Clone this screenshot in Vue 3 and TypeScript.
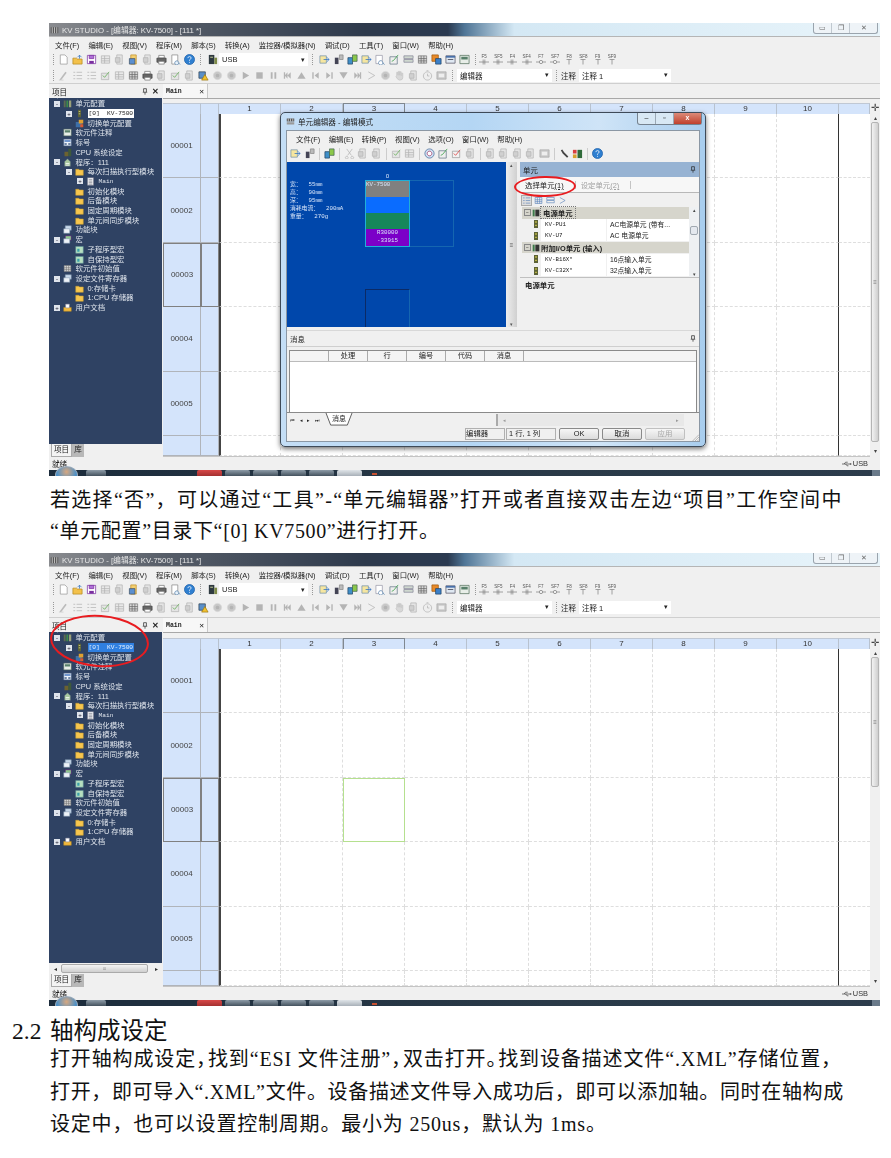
<script setup lang="ts">
type Part = [string, string, string?];

interface TreeRow {
    lv: number;
    exp?: "+" | "-";
    icon: string;
    text: string;
    mono?: boolean;
    picked?: boolean;
}

const gy = "#b4b4b4";
const icons: Record<string, Part[]> = {
    new: [["M2.5 1h5L10 3.5V11H2.5z", "#fff", "#999"]],
    open: [["M1 4.5h4l1 1h5V11H1z", "#f3c14b", "#b88a1e"], ["M6 3.5l2.2-2.2 2.2 2.2M8.2 1.5v3.5", "none", "#2a6fc0"]],
    save: [["M1.5 1.5h9v9h-9z", "#fff", "#7a2fa0"], ["M3.5 1.5h5v3.5h-5z", "#b070d8", "#7a2fa0"], ["M3.5 7.5h5v3h-5z", "#7a2fa0"]],
    sheet: [["M1.5 2h9v8h-9z", "#e8e8e8", gy], ["M1.5 5h9M1.5 7.5h9M5 2v8", "none", gy]],
    docg: [["M3 1h6v10H3z", "#e4e4e4", gy], ["M1.5 4h5v5h-5z", "#d0d0d0", gy]],
    docy: [["M3 1h6v10H3z", "#f4d070", "#c09030"], ["M1.5 5h6v6h-6z", "#5b8fd0", "#456"]],
    print: [["M3 1.5h6v3H3z", "#fff", "#777"], ["M1 4.5h10v4.5H1z", "#666", "#444"], ["M3 8h6v3H3z", "#fff", "#777"]],
    preview: [["M2 1h6.5v10H2z", "#fff", "#888"], ["M9 8.2a2.2 2.2 0 1 1-.1-.1zM9 9.5l2 2", "#e8f2fb", "#5580a8"]],
    help: [["M6 .5a5.5 5.5 0 1 0 .01 0z", "#2f7fd0", "#1c5fa8"], ["M4.2 4.5Q4.3 2.8 6 2.8t1.8 1.6Q7.8 5.3 6 6.4v1M6 8.6v1", "none", "#fff"]],
    device: [["M2 1h6v10H2z", "#2f3a40"], ["M8 4h3v7H8z", "#7d8a48"], ["M3.5 3h3v1h-3z", "#cfd6a0"]],
    rack: [["M1 2h2.5v9H1z", "#5d6b52"], ["M4.5 2H7v9H4.5z", "#3d8a4a"], ["M8 2h3v9H8z", "#9aa07a"]],
    unit: [["M4 1h4v10H4z", "#5c6236"], ["M5 3h2v1H5zM5 6h2v1H5z", "#dfe08a"]],
    swap: [["M1 4h8v7H1z", "#3d6fa8"], ["M5 1h6v5H5z", "#e0a030"], ["M7 7h4v4H7z", "#d85a30"]],
    note: [["M1 1.5h10v9H1z", "#e8eee8", "#54705c"], ["M2.5 3h7v3h-7z", "#58806a"]],
    tag: [["M1 1.5h10v9H1z", "#eef3fa", "#48648c"], ["M2 3h8v2H2z", "#4878c0"], ["M2 7h3v2H2zM7 7h3v2H7z", "#48648c"]],
    cpu: [["M7 1h4v10H7z", "#3f5a3a"], ["M2 5h5v6H2z", "#6c6230"]],
    prog: [["M2 5l4-4 4 4v6H2z", "#a8c8a0", "#567"], ["M3.5 7h5v1h-5zM3.5 9h5v1h-5z", "#fff"]],
    folder: [["M1 3h4l1 1h5v7H1z", "#f7c64e", "#caa030"]],
    page: [["M2 1h8v10H2z", "#f4f6f8", "#778"], ["M3.5 3.5h5M3.5 5.5h5M3.5 7.5h5M3.5 9.5h5", "none", "#556"]],
    block: [["M3 1h8v6H3z", "#c8d8ea", "#7890a8"], ["M1 5h8v6H1z", "#eef3f8", "#7890a8"]],
    macro: [["M3 1h8v6H3z", "#90c890", "#507"], ["M1 5h8v6H1z", "#eef3f8", "#7890a8"]],
    sub: [["M1 2h10v9H1z", "#b6dfc0", "#5a8f98"], ["M3 5h3v4H3z", "#3aa0a8"]],
    init: [["M1.5 2h9v8h-9z", "#d8d8d8", "#777"], ["M1.5 5h9M1.5 7.5h9M4.5 2v8M7.5 2v8", "none", "#666"]],
    user: [["M1 6h10v5H1z", "#f2b83c", "#b88a1e"], ["M3.5 1.5h5v5h-5z", "#fff", "#889"]],
    pen: [["M2 10l6-8 1.5 1-6 8H2z", "#bbb"], ["M1 11h5", "none", "#ccc"]],
    list: [["M1.5 2.5h2M1.5 6h2M1.5 9.5h2M5 2.5h6M5 6h6M5 9.5h6", "none", gy]],
    chk: [["M1.5 3.5h8v7h-8z", "#e4e4e4", gy], ["M3 6l2 2 5-6", "none", "#5aa84a"]],
    chkr: [["M1.5 3.5h8v7h-8z", "#f2f2f2", "#999"], ["M3 6l2 2 5-6", "none", "#d83030"]],
    warn: [["M1 2h7v7H1z", "#5a8fc8", "#345"], ["M7.5 5l3.5 6H4z", "#f2c230", "#a07c10"]],
    rec: [["M6 1.5a4.5 4.5 0 1 0 .01 0z", "#c8c8c8", "#d8d8d8"], ["M6 4a2 2 0 1 0 .01 0z", gy]],
    play: [["M3 2l7 4-7 4z", gy]],
    stop: [["M2.5 2.5h7v7h-7z", gy]],
    pause: [["M3 2.5h2v7H3zM7 2.5h2v7H7z", gy]],
    first: [["M2 2.5h1.4v7H2zM9.5 2.5v7L6 6zM6 2.5v7L3 6z", gy]],
    up: [["M6 2.5l4.5 7h-9z", gy]],
    prev: [["M2.5 2.5h1.5v7H2.5zM9.5 2.5v7L5 6z", gy]],
    next: [["M8 2.5h1.5v7H8zM2.5 2.5v7L7 6z", gy]],
    down: [["M6 9.5l4.5-7h-9z", gy]],
    last: [["M8.6 2.5H10v7H8.6zM2.5 2.5v7L6 6zM6 2.5v7L9 6z", gy]],
    chev: [["M2.5 2l7 4-7 4", "none", gy]],
    hand: [["M3 6V2.5h1.2V5.5h.6V1.5H6v4h.6V2h1.2v4h.6V3.5h1.2V8q0 3-3 3H6Q4 11 2 7z", "#d8d8d8", "#c4c4c4"]],
    clock: [["M6 2a4.5 4.5 0 1 0 .01 0zM6 4v2.5h2M5 .8h2", "#eee", gy]],
    panel: [["M1 2h10v8H1z", "#c8c8c8", "#aaa"], ["M3 4h6v4H3z", "#eee"]],
    go: [["M1 2h7v8H1z", "#f6e6a0", "#7090a8"], ["M5 6h6M8.5 3.5L11 6 8.5 8.5", "none", "#2a6fc0"]],
    port: [["M2 4h4v7H2z", "#445"], ["M7 1h4v5H7z", "#bbb", "#888"]],
    link: [["M1 4h5v7H1z", "#3f8fc8", "#246"], ["M6 1h5v7H6z", "#8cc84a", "#465"]],
    zoom: [["M1 1.5h7v9H1z", "#fff", "#99a"], ["M8 8a2.4 2.4 0 1 1-.1-.1zM8 9.5l2.5 2", "#fff", "#5580a8"]],
    grn: [["M1 3h8v8H1z", "#eee", "#678"], ["M3 8l2-1 5-6", "none", "#2a9a3a"]],
    pile: [["M1 2h10v3H1zM1 6h10v3H1z", "#cfd8cf", "#889"]],
    win: [["M1 2h10v8H1z", "#dfe8f2", "#556"], ["M1 2h10v2H1z", "#4870a8"], ["M3 6h6", "none", "#334"]],
    org: [["M1 1h7v7H1z", "#e88a2a", "#a05a10"], ["M5 5h6v6H5z", "#3a7fc8", "#246"]],
    wrench: [["M2 2.5l1.6-1 2 3 4.6 4.8-1.4 1.4L4 6z", "#444"]],
    tool: [["M1 2h4v4H1z", "#d84040"], ["M6 2h5v9H6z", "#2f6a3a"], ["M1 7h4v4H1z", "#d8a030"]],
    hex: [["M6 1a5 5 0 1 0 .01 0z", "#cfe0f2", "#45689a"], ["M6 3.5a2.5 2.5 0 1 0 .01 0z", "#fff", "#a03060"]],
    cut: [["M3 1l5 7M9 1L4 8", "none", gy], ["M3 9a1.5 1.5 0 1 0 .01 0zM9 9a1.5 1.5 0 1 0 .01 0z", "none", gy]],
};

const bar1 = ["new", "open", "save", "sheet", "docg", "docy", "docg", "print", "preview", "help"];
const bar1b = ["go", "port", "link", "go", "zoom", "grn", "pile", "init", "org", "win", "note"];
const bar2 = ["pen", "list", "list", "chk", "sheet", "init", "print", "docg", "chk", "docg", "warn", "rec", "rec", "play", "stop", "pause", "first", "up", "prev", "next", "down", "last", "chev", "rec", "hand", "docg", "clock", "panel"];
const fkeys = ["F5", "SF5", "F4", "SF4", "F7", "SF7", "F8", "SF8", "F9", "SF9"];
const menu = ["文件(F)", "编辑(E)", "视图(V)", "程序(M)", "脚本(S)", "转换(A)", "监控器/模拟器(N)", "调试(D)", "工具(T)", "窗口(W)", "帮助(H)"];

const dlgMenu = ["文件(F)", "编辑(E)", "转换(P)", "视图(V)", "选项(O)", "窗口(W)", "帮助(H)"];
const dlgBar = [
    ["go", "port"],
    ["link"],
    ["cut", "docg", "docg"],
    ["chk", "sheet"],
    ["hex", "grn", "chkr", "docg"],
    ["docg", "docg", "docg", "docg", "panel"],
    ["wrench", "tool"],
    ["help"],
];
const dlgInfo = ["宽：  55mm", "高：  90mm", "深：  95mm", "消耗电流：  200mA", "重量：  270g"];
const unitTools = ["list", "init", "pile", "chev"];

const tree: TreeRow[] = [
    { lv: 0, exp: "-", icon: "rack", text: "单元配置" },
    { lv: 1, exp: "+", icon: "unit", text: "[0]  KV-7500", mono: true, picked: true },
    { lv: 1, icon: "swap", text: "切换单元配置" },
    { lv: 0, icon: "note", text: "软元件注释" },
    { lv: 0, icon: "tag", text: "标号" },
    { lv: 0, icon: "cpu", text: "CPU 系统设定" },
    { lv: 0, exp: "-", icon: "prog", text: "程序：111" },
    { lv: 1, exp: "-", icon: "folder", text: "每次扫描执行型模块" },
    { lv: 2, exp: "+", icon: "page", text: "Main", mono: true },
    { lv: 1, icon: "folder", text: "初始化模块" },
    { lv: 1, icon: "folder", text: "后备模块" },
    { lv: 1, icon: "folder", text: "固定周期模块" },
    { lv: 1, icon: "folder", text: "单元间同步模块" },
    { lv: 0, icon: "block", text: "功能块" },
    { lv: 0, exp: "-", icon: "macro", text: "宏" },
    { lv: 1, icon: "sub", text: "子程序型宏" },
    { lv: 1, icon: "sub", text: "自保持型宏" },
    { lv: 0, icon: "init", text: "软元件初始值" },
    { lv: 0, exp: "-", icon: "block", text: "设定文件寄存器" },
    { lv: 1, icon: "folder", text: "0:存储卡" },
    { lv: 1, icon: "folder", text: "1:CPU 存储器" },
    { lv: 0, exp: "+", icon: "user", text: "用户文档" },
];

const windows = [
    { id: 1, title: "KV STUDIO - [编辑器: KV-7500] - [111 *]", dialog: true },
    { id: 2, title: "KV STUDIO - [编辑器: KV-7500] - [111 *]", dialog: false },
];

const rows = ["00001", "00002", "00003", "00004", "00005", ""];
const cols = [1, 2, 3, 4, 5, 6, 7, 8, 9, 10];
const taskTiles = [0, 1, 2, 3, 4, 5, 6];
const msgCols = ["", "处理", "行", "编号", "代码", "消息"];
const unitRows = [
    { head: true, name: "电源单元", focus: true },
    { name: "KV-PU1", desc: "AC电源单元 (带有..." },
    { name: "KV-U7", desc: "AC 电源单元" },
    { head: true, name: "附加I/O单元 (输入)" },
    { name: "KV-B16X*", desc: "16点输入单元" },
    { name: "KV-C32X*", desc: "32点输入单元" },
];
</script>

<template>
    <div class="page">
        <template v-for="win in windows" :key="win.id">
            <div class="shot" :class="{ second: !win.dialog }">
                <div class="title">
                    <svg class="ico" viewBox="0 0 12 12"><path d="M1 3h10v8H1z" fill="#555" /><path d="M3 3v8M6 3v8M9 3v8" stroke="#ddd" fill="none" /></svg>
                    <span>{{ win.title }}</span>
                    <div class="caption">
                        <span>▭</span><span>❐</span><span class="wide">✕</span>
                    </div>
                </div>
                <div class="menu">
                    <span v-for="m in menu" :key="m">{{ m }}</span>
                </div>
                <div class="bar bar-one">
                    <i class="grip lead" />
                    <svg v-for="(n, i) in bar1" :key="i" class="tool" viewBox="0 0 12 12">
                        <path v-for="(p, j) in icons[n]" :key="j" :d="p[0]" :fill="p[1]" :stroke="p[2] || 'none'" stroke-width="0.8" />
                    </svg>
                    <i class="grip" />
                    <svg class="tool" viewBox="0 0 12 12">
                        <path v-for="(p, j) in icons.device" :key="j" :d="p[0]" :fill="p[1]" />
                    </svg>
                    <div class="combo usb"><span>USB</span><b>▾</b></div>
                    <i class="grip" />
                    <svg v-for="(n, i) in bar1b" :key="'b' + i" class="tool" viewBox="0 0 12 12">
                        <path v-for="(p, j) in icons[n]" :key="j" :d="p[0]" :fill="p[1]" :stroke="p[2] || 'none'" stroke-width="0.8" />
                    </svg>
                    <i class="grip tight" />
                    <div v-for="f in fkeys" :key="f" class="fkey">
                        <span>{{ f }}</span>
                        <svg viewBox="0 0 12 6"><path :d="f.includes('7') ? 'M0 3h4M8 3h4M4 3a2 2 0 1 0 4 0a2 2 0 1 0-4 0' : f.includes('8') || f.includes('9') ? 'M6 0v6M3 0h6' : 'M0 3h12M5 0v6M7 0v6'" fill="none" stroke="#777" stroke-width="0.8" /></svg>
                    </div>
                </div>
                <div class="bar bar-two">
                    <i class="grip lead" />
                    <svg v-for="(n, i) in bar2" :key="i" class="tool" viewBox="0 0 12 12">
                        <path v-for="(p, j) in icons[n]" :key="j" :d="p[0]" :fill="p[1]" :stroke="p[2] || 'none'" stroke-width="0.8" />
                    </svg>
                    <i class="grip" />
                    <div class="combo editor"><span>编辑器</span><b>▾</b></div>
                    <i class="grip" />
                    <span class="bar-label">注释</span>
                    <div class="combo comment"><span>注释 1</span><b>▾</b></div>
                </div>

                <div class="work">
                    <div class="side">
                        <div class="side-head">
                            <span>项目</span>
                            <span class="side-btns">
                                <svg class="pin" viewBox="0 0 8 10"><path d="M2 1h4v4l1 1H1l1-1zM4 6v3.5" fill="none" stroke="#222" /></svg>
                                <b>✕</b>
                            </span>
                        </div>
                        <div class="tree">
                            <div v-for="row in tree" :key="row.text" class="tree-row" :class="'lv' + row.lv">
                                <span class="exp" :class="{ none: !row.exp }">{{ row.exp }}</span>
                                <svg class="node" viewBox="0 0 12 12">
                                    <path v-for="(p, j) in icons[row.icon]" :key="j" :d="p[0]" :fill="p[1]" :stroke="p[2] || 'none'" stroke-width="0.7" />
                                </svg>
                                <span class="label" :class="{ mono: row.mono, picked: row.picked, sel: row.picked && !win.dialog }">{{ row.text }}</span>
                            </div>
                            <div v-if="!win.dialog" class="hscroll">
                                <span class="arrow">◂</span>
                                <span class="thumb">⦙⦙⦙</span>
                                <span class="arrow">▸</span>
                            </div>
                        </div>
                        <div class="side-tabs">
                            <span class="on">项目</span><span>库</span>
                        </div>
                    </div>
                    <div class="main">
                        <div class="doc-tabs">
                            <div class="doc-tab"><span>Main</span><b>✕</b></div>
                        </div>
                        <div class="ladder-wrap">
                            <div class="ladder">
                                <div class="lh" /><div class="lh" />
                                <div v-for="c in cols" :key="c" class="lh num" :class="{ cur: c === 3 }">{{ c }}</div>
                                <div class="lh" />
                                <template v-for="(r, ri) in rows" :key="ri">
                                    <div class="rh" :class="{ cur: ri === 2 }">{{ r }}</div>
                                    <div class="rh" :class="{ cur: ri === 2 }" />
                                    <div
                                        v-for="c in cols"
                                        :key="c"
                                        class="cell"
                                        :class="{ first: c === 1, last: c === 10, target: !win.dialog && ri === 2 && c === 3 }"
                                    />
                                    <div class="cell tail" />
                                </template>
                            </div>
                            <div class="vscroll">
                                <span class="split">✛</span>
                                <span class="arrow">▴</span>
                                <span class="vthumb"><em>≡</em></span>
                                <span class="arrow end">▾</span>
                            </div>
                        </div>
                    </div>
                </div>

                <div class="status">
                    <span>就绪</span>
                    <span class="usb-state">
                        <svg viewBox="0 0 14 8"><path d="M0 4h11M3 4l2-2.5h3M5 4l2 2.5h2" fill="none" stroke="#444" /><path d="M11 2.5L14 4l-3 1.5z" fill="#444" /></svg>
                        USB
                    </span>
                </div>
                <div class="taskbar">
                    <i class="orb" />
                    <i v-for="t in taskTiles" :key="t" class="tile" :class="'t' + t" />
                    <i class="dot" />
                    <i class="corner" />
                </div>

                <div v-if="win.dialog" class="dialog">
                    <div class="dlg-title">
                        <svg class="ico" viewBox="0 0 12 12"><path d="M1 2h10v4H1z" fill="#555" /><path d="M1 7h10v3H1z" fill="#999" /><path d="M3 2v4M6 2v4M9 2v4" stroke="#ddd" /></svg>
                        <span>单元编辑器 - 编辑模式</span>
                        <div class="dlg-caption"><span>–</span><span>▫</span><span class="close">x</span></div>
                    </div>
                    <div class="dlg-body">
                        <div class="dlg-menu"><span v-for="m in dlgMenu" :key="m">{{ m }}</span></div>
                        <div class="dlg-bar">
                            <template v-for="(group, g) in dlgBar" :key="g">
                                <svg v-for="(n, i) in group" :key="i" class="dtool" viewBox="0 0 12 12">
                                    <path v-for="(p, j) in icons[n]" :key="j" :d="p[0]" :fill="p[1]" :stroke="p[2] || 'none'" stroke-width="0.8" />
                                </svg>
                                <i v-if="g < dlgBar.length - 1" class="dsep" />
                            </template>
                        </div>
                        <div class="dlg-mid">
                            <div class="canvas">
                                <div class="info">
                                    <div v-for="line in dlgInfo" :key="line">{{ line }}</div>
                                </div>
                                <div class="slots">
                                    <div class="slot-no">0</div>
                                    <div class="slot-row">
                                        <div class="module">
                                            <div class="m gray">KV-7500</div>
                                            <div class="m blue" />
                                            <div class="m green" />
                                            <div class="m purple">R30000<br />-33915</div>
                                        </div>
                                        <div class="empty" />
                                    </div>
                                    <div class="bottom-slot" />
                                </div>
                            </div>
                            <div class="cv-scroll">
                                <span>▴</span><em>≡</em><span>▾</span>
                            </div>
                            <div class="units">
                                <div class="units-head">
                                    <span>单元</span>
                                    <svg class="pin" viewBox="0 0 8 10"><path d="M2 1h4v4l1 1H1l1-1zM4 6v3.5" fill="none" stroke="#222" /></svg>
                                </div>
                                <div class="units-tabs">
                                    <span class="active">选择单元<u>(1)</u></span>
                                    <i class="tab-sep" />
                                    <span class="off">设定单元<u>(2)</u></span>
                                    <i class="tab-sep far" />
                                </div>
                                <div class="units-tools">
                                    <svg v-for="(n, i) in unitTools" :key="i" class="utool" :class="{ pressed: i === 0 }" viewBox="0 0 12 12">
                                        <path v-for="(p, j) in icons[n]" :key="j" :d="p[0]" fill="none" stroke="#5580b8" stroke-width="0.8" />
                                    </svg>
                                </div>
                                <div class="units-list">
                                    <div class="ul-rows">
                                        <template v-for="u in unitRows" :key="u.name">
                                            <div v-if="u.head" class="ul-head">
                                                <span class="box">−</span>
                                                <svg class="uic" viewBox="0 0 12 12"><path d="M1 1h3v10H1z" fill="#3d7a4a" /><path d="M5 1h6v10H5z" fill="#333" /></svg>
                                                <span :class="{ focus: u.focus }">{{ u.name }}</span>
                                            </div>
                                            <div v-else class="ul-item">
                                                <svg class="uic" viewBox="0 0 12 12"><path d="M3 0h6v12H3z" fill="#5c6236" /><path d="M5 2h2v2H5zM5 7h2v2H5z" fill="#e4d84a" /></svg>
                                                <span class="ul-name">{{ u.name }}</span>
                                                <span class="ul-desc">{{ u.desc }}</span>
                                            </div>
                                        </template>
                                    </div>
                                    <div class="ul-scroll"><span>▴</span><i /><span>▾</span></div>
                                </div>
                                <div class="units-desc">电源单元</div>
                            </div>
                        </div>
                        <div class="msg-head">
                            <span>消息</span>
                            <svg class="pin" viewBox="0 0 8 10"><path d="M2 1h4v4l1 1H1l1-1zM4 6v3.5" fill="none" stroke="#222" /></svg>
                        </div>
                        <div class="msg-table">
                            <div class="msg-cols">
                                <span v-for="(c, i) in msgCols" :key="i">{{ c }}</span>
                                <span class="rest" />
                            </div>
                            <div class="msg-body" />
                        </div>
                        <div class="msg-tabs">
                            <span class="nav"><b>⏮</b><b>◂</b><b>▸</b><b>⏭</b></span>
                            <span class="msg-tab">
                                <svg viewBox="0 0 28 14"><path d="M0 0l5 13h18l5-13" fill="#fff" stroke="#555" /></svg>
                                <span>消息</span>
                            </span>
                            <span class="msg-track">◂<em />▸</span>
                        </div>
                        <div class="dlg-status">
                            <span class="st st-a">编辑器</span>
                            <span class="st st-b">1 行, 1 列</span>
                            <span class="btn">OK</span>
                            <span class="btn">取消</span>
                            <span class="btn off">应用</span>
                            <svg class="resize" viewBox="0 0 10 10"><path d="M2 10l8-8M5 10l5-5M8 10l2-2" stroke="#aaa" fill="none" /></svg>
                        </div>
                    </div>
                    <div class="ring" />
                </div>
                <div v-else class="ring-tree" />
            </div>

            <div v-if="win.dialog" class="para first-para">
                <p class="ls-a">若选择“否”，可以通过“工具”-“单元编辑器”打开或者直接双击左边“项目”工作空间中</p>
                <p class="ls-b">“单元配置”目录下“[0] KV7500”进行打开。</p>
            </div>
        </template>

        <h2 class="heading"><span>2.2</span>轴构成设定</h2>
        <div class="para last-para">
            <p class="ls-c">打开轴构成设定<span class="nar">，</span>找到“ESI 文件注册”<span class="nar">，</span>双击打开<span class="nar">。</span>找到设备描述文件“.XML”存储位置，</p>
            <p class="ls-b">打开，即可导入“.XML”文件。设备描述文件导入成功后，即可以添加轴。同时在轴构成</p>
            <p class="ls-d">设定中，也可以设置控制周期。最小为 250us，默认为 1ms。</p>
        </div>
    </div>
</template>

<style>
html,
body {
    margin: 0;
    background: #fff;
}
</style>

<style scoped>
.page {
    width: 891px;
    height: 1158px;
    padding-top: 23px;
    box-sizing: border-box;
    overflow: hidden;
    background: #fff;
    font-family: "Liberation Sans", "Noto Sans CJK SC", sans-serif;
    color: #222;
}

.shot {
    position: relative;
    display: flex;
    flex-direction: column;
    width: 831px;
    height: 453px;
    margin-left: 49px;
    background: #f0f0f0;
    font-size: 8px;
    filter: blur(0.3px);
    overflow: hidden;
}

.title {
    display: flex;
    align-items: center;
    gap: 3px;
    height: 13px;
    flex: none;
    padding-left: 1px;
    font-size: 7.8px;
    color: #e6e6e6;
    background: linear-gradient(90deg, #8a8c90 0, #565d68 14%, #2e3a4c 38%, #2b3a50 48%, #4f7596 50%, #d4e8f4 56%, #e8f4fa 100%);
}

.ico {
    width: 9px;
    height: 9px;
    flex: none;
}

.caption {
    display: flex;
    height: 10px;
    margin: -3px 2px 0 auto;
    border: 1px solid #9aa4ad;
    border-top: 0;
    border-radius: 0 0 3px 3px;
    background: #eef3f7;
    color: #666;
    font-size: 7px;
    line-height: 9px;
}

.caption span {
    width: 17px;
    text-align: center;
    border-right: 1px solid #c0c8cf;
}

.caption .wide {
    width: 27px;
    border-right: 0;
}

.menu {
    display: flex;
    align-items: center;
    gap: 9.2px;
    height: 15px;
    flex: none;
    padding-left: 6px;
    border-top: 1px solid #b5b5b5;
    box-sizing: border-box;
    font-size: 7.4px;
    white-space: nowrap;
}

.bar {
    display: flex;
    align-items: center;
    flex: none;
    padding-left: 1px;
    white-space: nowrap;
}

.bar-one {
    height: 15px;
    margin-top: 1px;
}

.bar-two {
    height: 16px;
}

.second .bar-two {
    height: 20px;
}

.tool {
    width: 11px;
    height: 11px;
    flex: none;
    margin: 0 1.5px;
}

.grip {
    width: 1px;
    height: 11px;
    flex: none;
    margin: 0 4px;
    border-left: 1px dotted #999;
    box-sizing: border-box;
}

.grip.lead {
    margin: 0 2px 0 3px;
}

.grip.tight {
    margin-right: 1px;
}

.combo {
    display: flex;
    align-items: center;
    justify-content: space-between;
    flex: none;
    height: 13px;
    padding: 0 3px;
    box-sizing: border-box;
    background: #fff;
    font-size: 7.5px;
}

.combo b {
    font-size: 7px;
    font-weight: 400;
}

.usb {
    width: 89px;
}

.editor {
    width: 95px;
}

.comment {
    width: 92px;
}

.bar-label {
    margin-right: 3px;
    font-size: 7.5px;
}

.fkey {
    display: flex;
    flex-direction: column;
    align-items: center;
    width: 14.2px;
    flex: none;
    font-size: 4.5px;
    line-height: 5px;
    color: #555;
}

.fkey svg {
    width: 10px;
    height: 6px;
}

.work {
    display: flex;
    flex: 1;
    min-height: 0;
    border-top: 1px solid #cfcfcf;
}

.side {
    display: flex;
    flex-direction: column;
    width: 113px;
    flex: none;
}

.side-head {
    display: flex;
    align-items: center;
    justify-content: space-between;
    height: 14px;
    flex: none;
    padding: 0 3px;
    box-sizing: border-box;
    font-size: 7.6px;
}

.side-btns {
    display: flex;
    align-items: center;
    gap: 4px;
    font-size: 7.5px;
}

.pin {
    width: 6px;
    height: 7px;
    flex: none;
}

.tree {
    display: flex;
    flex-direction: column;
    flex: 1;
    min-height: 0;
    padding-top: 1px;
    background-color: #2f4263;
    background-image: linear-gradient(#5a6b88 50%, transparent 50%);
    background-size: 1px 2px;
    background-position: 8px 0;
    background-repeat: no-repeat;
    color: #dfe4ec;
}

.tree-row {
    display: flex;
    align-items: center;
    flex: none;
    height: 9.71px;
    font-size: 7.4px;
    white-space: nowrap;
}

.lv0 {
    padding-left: 5px;
}

.lv1 {
    padding-left: 17px;
}

.lv2 {
    padding-left: 28px;
}

.exp {
    width: 6px;
    height: 6px;
    flex: none;
    margin-right: 3px;
    background: #dfe4ec;
    color: #223;
    font-size: 6px;
    line-height: 6px;
    text-align: center;
}

.exp.none {
    visibility: hidden;
}

.node {
    width: 9px;
    height: 9px;
    flex: none;
    margin-right: 3.5px;
}

.label {
    line-height: 9px;
}

.mono {
    font-family: "Liberation Mono", monospace;
    font-size: 6.2px;
    white-space: pre;
}

.picked {
    padding: 0 1px;
    background: #fff;
    color: #222;
}

.picked.sel {
    background: #2f7fe0;
    color: #e8f2ff;
}

.hscroll {
    display: flex;
    align-items: center;
    height: 11px;
    margin-top: auto;
    background: #f0f0f0;
    color: #333;
    font-size: 6px;
}

.hscroll .arrow {
    width: 12px;
    text-align: center;
}

.hscroll .thumb {
    flex: 1;
    height: 9px;
    margin: 0 2px 0 0;
    border: 1px solid #aaa;
    border-radius: 2px;
    box-sizing: border-box;
    background: linear-gradient(#f4f4f4, #cfcfcf);
    color: #666;
    font-size: 4px;
    line-height: 7px;
    text-align: center;
}

.side-tabs {
    display: flex;
    height: 13px;
    flex: none;
    padding-left: 2px;
    font-size: 7.6px;
    line-height: 12px;
}

.side-tabs span {
    padding: 0 2px;
    background: #b8b8b8;
}

.side-tabs .on {
    background: #f4f4f4;
    border: 1px solid #aaa;
    border-top: 0;
    line-height: 11px;
}

.main {
    display: flex;
    flex-direction: column;
    flex: 1;
    min-width: 0;
    margin-left: 1px;
}

.doc-tabs {
    height: 14px;
    flex: none;
    border-bottom: 1px solid #a8a8a8;
}

.doc-tab {
    display: flex;
    align-items: center;
    justify-content: space-between;
    width: 45px;
    height: 14px;
    padding: 0 3px;
    box-sizing: border-box;
    background: #f7f7f7;
    border-right: 1px solid #c8c8c8;
    font-family: "Liberation Mono", monospace;
    font-size: 6.5px;
    font-weight: 700;
}

.doc-tab b {
    font-size: 8px;
}

.ladder-wrap {
    display: flex;
    flex: 1;
    min-height: 0;
    margin-top: 4px;
}

.second .ladder-wrap {
    margin-top: 5px;
}

.ladder {
    display: grid;
    grid-template-columns: 38px 18px repeat(10, 62px) 31px;
    grid-template-rows: 11px repeat(5, 64.4px) 1fr;
    flex: none;
    width: 707px;
    background: #fff;
    border-bottom: 1px solid #c4c4c4;
}

.lh {
    background: #d4e4fb;
    box-sizing: border-box;
    border-right: 1px solid #b8c2cf;
    border-top: 1px solid #c0c8d4;
    text-align: center;
    font-size: 8px;
    line-height: 10px;
    color: #333;
}

.lh.cur {
    border: 1px solid #808890;
    border-bottom: 0;
}

.rh {
    display: flex;
    align-items: center;
    justify-content: center;
    box-sizing: border-box;
    background: #d4e4fb;
    border-right: 1px solid #b0b4ba;
    border-bottom: 1px solid #b0b4ba;
    font-size: 8px;
    color: #444;
}

.rh.cur {
    border: 1px solid #808080;
}

.cell {
    box-sizing: border-box;
    border-right: 1px dashed #dedede;
    border-bottom: 1px dashed #dedede;
}

.cell.first {
    border-left: 2px solid #444;
}

.cell.last {
    border-right: 1.5px solid #333;
}

.cell.tail {
    border-right: 0;
}

.cell.target {
    border: 1px solid #b5e08f;
}

.vscroll {
    display: flex;
    flex-direction: column;
    align-items: center;
    flex: 1;
    background: #f0f0f0;
    color: #444;
    font-size: 7px;
}

.split {
    height: 11px;
    font-size: 10px;
    line-height: 10px;
}

.vscroll .arrow {
    height: 8px;
    font-size: 6px;
    line-height: 8px;
}

.vscroll .end {
    margin-top: auto;
    margin-bottom: 2px;
}

.vthumb {
    display: flex;
    align-items: center;
    justify-content: center;
    width: 8px;
    height: 320px;
    border: 1px solid #b4b4b4;
    border-radius: 2px;
    box-sizing: border-box;
    background: linear-gradient(90deg, #f2f2f2, #cfcfcf);
}

.second .vthumb {
    height: 130px;
}

.vthumb em {
    font-style: normal;
    font-size: 6px;
    color: #777;
}

.status {
    display: flex;
    align-items: center;
    justify-content: space-between;
    height: 13px;
    flex: none;
    padding: 0 12px 0 3px;
    font-size: 7.6px;
}

.usb-state {
    display: flex;
    align-items: center;
    gap: 1px;
    font-size: 7.4px;
    color: #333;
}

.usb-state svg {
    width: 10px;
    height: 6px;
}

.taskbar {
    position: relative;
    display: flex;
    gap: 3px;
    height: 6px;
    flex: none;
    padding-left: 37px;
    background: linear-gradient(90deg, #1c2c3c, #2a3a48 60%, #2c3c4c);
}

.orb {
    position: absolute;
    left: 6px;
    bottom: -8px;
    width: 21px;
    height: 16px;
    border-radius: 50%;
    background: radial-gradient(circle at 50% 30%, #d8a880, #4a90c8 65%);
    border: 1px solid #9ab;
}

.tile {
    width: 25px;
    flex: none;
    border-radius: 2px 2px 0 0;
    background: linear-gradient(#8e9ca8, #44525e);
}

.t0 {
    margin-right: 88px;
    width: 20px;
}

.t1 {
    background: linear-gradient(#d84848, #a43030);
}

.t6 {
    background: linear-gradient(#dfe4e8, #a8b0b8);
}

.dot {
    width: 5px;
    height: 2px;
    margin: 3px 0 0 7px;
    background: #c85030;
}

.corner {
    width: 8px;
    margin-left: auto;
    background: #6a7a8a;
}

.dialog {
    position: absolute;
    left: 231px;
    top: 89px;
    display: flex;
    flex-direction: column;
    width: 426px;
    height: 335px;
    padding: 0 5px 4px;
    box-sizing: border-box;
    border: 1px solid #3e4a58;
    border-radius: 5px;
    background: linear-gradient(90deg, #c4def6, #b4d6f4 45%, #cfe4f7 75%, #a8cdee);
    box-shadow: 0 2px 5px rgba(0, 0, 0, 0.55);
}

.dlg-title {
    display: flex;
    align-items: center;
    gap: 3px;
    height: 17px;
    flex: none;
    font-size: 7.6px;
    color: #222;
}

.dlg-caption {
    display: flex;
    height: 11px;
    margin: -6px -2px 0 auto;
    border: 1px solid #75828f;
    border-top: 0;
    border-radius: 0 0 3px 3px;
    background: #d8e8f4;
    font-size: 7px;
    line-height: 10px;
    text-align: center;
}

.dlg-caption span {
    width: 17px;
    border-right: 1px solid #9aa8b4;
}

.dlg-caption .close {
    width: 27px;
    border-right: 0;
    background: linear-gradient(#dc8a78, #c0402c);
    color: #fff;
    font-weight: 700;
}

.dlg-body {
    position: relative;
    display: flex;
    flex-direction: column;
    flex: 1;
    min-height: 0;
    border: 1px solid #8b97a4;
    background: #f0f0f0;
}

.dlg-menu {
    display: flex;
    align-items: center;
    gap: 8.5px;
    height: 14px;
    flex: none;
    padding-left: 9px;
    font-size: 7.4px;
}

.dlg-bar {
    display: flex;
    align-items: center;
    gap: 2.5px;
    height: 17px;
    flex: none;
    padding-left: 3px;
}

.dtool {
    width: 11px;
    height: 11px;
    flex: none;
}

.dsep {
    width: 1px;
    height: 12px;
    margin: 0 1.5px;
    background: #ccc;
}

.dlg-mid {
    display: flex;
    height: 165px;
    flex: none;
}

.canvas {
    position: relative;
    display: flex;
    width: 219px;
    flex: none;
    background: #0047ab;
    color: #d8e6fa;
    font-size: 6.2px;
}

.info {
    width: 78px;
    flex: none;
    padding: 19px 0 0 3px;
    box-sizing: border-box;
    line-height: 8px;
    white-space: pre;
    font-family: "Liberation Mono", "Noto Sans CJK SC", monospace;
    font-size: 5.8px;
}

.slots {
    display: flex;
    flex-direction: column;
    flex: 1;
    padding-top: 10px;
}

.slot-no {
    width: 45px;
    height: 8px;
    line-height: 8px;
    text-align: center;
}

.slot-row {
    display: flex;
}

.module {
    width: 45px;
    height: 67px;
    box-sizing: border-box;
    border: 1px solid #20b0d8;
}

.m {
    height: 16px;
    font-family: "Liberation Mono", monospace;
    font-size: 5.8px;
    line-height: 8px;
}

.gray {
    background: #808080;
}

.blue {
    background: #0a6cff;
}

.green {
    background: #16875a;
}

.purple {
    height: 17px;
    background: #7b00c8;
    text-align: center;
}

.empty {
    width: 44px;
    height: 67px;
    box-sizing: border-box;
    border: 1px solid #1566b0;
    border-left: 0;
}

.bottom-slot {
    width: 45px;
    height: 38px;
    margin-top: auto;
    box-sizing: border-box;
    border: 1px solid #0b2a66;
    border-right-color: #1566b0;
    border-bottom: 0;
}

.cv-scroll {
    display: flex;
    flex-direction: column;
    align-items: center;
    justify-content: space-between;
    width: 11px;
    flex: none;
    margin-right: 3px;
    background: linear-gradient(90deg, #eee, #d0d0d0);
    color: #555;
    font-size: 5px;
}

.cv-scroll em {
    font-style: normal;
    font-size: 6px;
}

.units {
    display: flex;
    flex-direction: column;
    flex: 1;
    min-width: 0;
    font-size: 7.4px;
}

.units-head {
    display: flex;
    align-items: center;
    justify-content: space-between;
    height: 15px;
    flex: none;
    padding: 0 3px;
    background: #97b3d3;
}

.units-tabs {
    display: flex;
    align-items: center;
    height: 15px;
    flex: none;
    padding-left: 5px;
    background: #f7f7f7;
    border-bottom: 1px solid #b8b8b8;
}

.tab-sep {
    width: 1px;
    height: 8px;
    margin: 0 5px 0 11px;
    background: #c4c4c4;
}

.tab-sep.far {
    margin-left: 11px;
}

.off {
    color: #a0a0a0;
}

.units-tools {
    display: flex;
    gap: 3px;
    height: 14px;
    flex: none;
    align-items: center;
    padding-left: 2px;
}

.utool {
    width: 9px;
    height: 9px;
}

.utool.pressed {
    outline: 1px solid #aaa;
    background: #ddd;
}

.units-list {
    display: flex;
    height: 70px;
    flex: none;
    border-bottom: 1px solid #c0c0c0;
}

.ul-rows {
    flex: 1;
    min-width: 0;
    padding-left: 2px;
}

.ul-head {
    display: flex;
    align-items: center;
    gap: 1px;
    height: 11.6px;
    background: #d6d5cc;
    font-weight: 700;
    font-size: 7.4px;
    white-space: nowrap;
}

.focus {
    padding: 0 2px;
    outline: 1px dotted #777;
}

.box {
    width: 5px;
    height: 5px;
    margin-left: 2px;
    border: 1px solid #888;
    font-size: 5px;
    font-weight: 400;
    line-height: 5px;
    text-align: center;
}

.uic {
    width: 8px;
    height: 8px;
    flex: none;
}

.ul-item {
    display: flex;
    align-items: center;
    height: 11.6px;
    padding-left: 10px;
    background: #f0f0f0;
    white-space: nowrap;
}

.ul-name {
    width: 65px;
    height: 11px;
    margin-left: 1px;
    padding-left: 4px;
    box-sizing: border-box;
    background: #fff;
    font-family: "Liberation Mono", monospace;
    font-size: 5.8px;
    line-height: 11px;
}

.ul-desc {
    flex: 1;
    height: 11px;
    margin-left: 1px;
    padding-left: 3px;
    background: #fff;
    font-size: 6.8px;
    line-height: 11px;
    overflow: hidden;
}

.ul-scroll {
    display: flex;
    flex-direction: column;
    align-items: center;
    justify-content: space-between;
    width: 10px;
    flex: none;
    font-size: 5px;
    color: #444;
    background: #eef0f2;
}

.ul-scroll i {
    width: 8px;
    height: 9px;
    margin: -24px 0 0;
    border: 1px solid #a0a8b0;
    box-sizing: border-box;
    border-radius: 2px;
    background: #e4e8ee;
}

.units-desc {
    padding: 1px 0 0 5px;
    font-weight: 700;
    font-size: 7.4px;
}

.msg-head {
    display: flex;
    align-items: center;
    justify-content: space-between;
    height: 15px;
    flex: none;
    margin-top: 3px;
    padding: 0 3px;
    font-size: 7.4px;
    border-top: 1px solid #d8d8d8;
    border-bottom: 1px solid #cfcfcf;
}

.msg-table {
    display: flex;
    flex-direction: column;
    flex: none;
    margin: 3px 2px 0;
    border: 1px solid #8a8a8a;
    border-bottom: 0;
}

.msg-cols {
    display: flex;
    height: 10px;
    background: #f4f4f4;
    border-bottom: 1px solid #bbb;
    font-size: 7.2px;
    line-height: 10px;
}

.msg-cols span {
    width: 39px;
    flex: none;
    box-sizing: border-box;
    border-right: 1px solid #aaa;
    text-align: center;
}

.msg-cols .rest {
    flex: 1;
    border: 0;
}

.msg-body {
    height: 50px;
    background: #fff;
}

.msg-tabs {
    display: flex;
    align-items: flex-start;
    height: 14px;
    flex: none;
    border-top: 1px solid #8a8a8a;
    font-size: 7px;
}

.nav {
    display: flex;
    justify-content: space-between;
    width: 30px;
    flex: none;
    padding: 3px 0 0 3px;
    margin-right: 5px;
    font-size: 5px;
    line-height: 8px;
}

.nav b {
    font-weight: 400;
}

.msg-tab {
    position: relative;
    display: flex;
    justify-content: center;
    width: 28px;
    height: 13px;
    flex: none;
    line-height: 12px;
}

.msg-tab svg {
    position: absolute;
    inset: 0;
    width: 28px;
    height: 13px;
}

.msg-tab span {
    position: relative;
}

.msg-track {
    display: flex;
    align-items: center;
    justify-content: space-between;
    width: 188px;
    height: 12px;
    margin: 1px 0 0 143px;
    padding: 0 5px;
    box-sizing: border-box;
    background: #e8e8e8;
    border-left: 2px solid #aaa;
    color: #999;
    font-size: 5px;
}

.dlg-status {
    display: flex;
    align-items: center;
    flex: 1;
    padding-left: 178px;
    font-size: 7.4px;
}

.st {
    height: 12px;
    flex: none;
    box-sizing: border-box;
    border: 1px solid #b0b0b0;
    line-height: 10px;
}

.st-a {
    width: 40px;
}

.st-b {
    width: 50px;
    margin: 0 2px 0 1px;
    padding-left: 2px;
}

.btn {
    width: 40px;
    flex: none;
    height: 12px;
    margin-left: 1px;
    margin-right: 2px;
    box-sizing: border-box;
    border: 1px solid #8a8a8a;
    border-radius: 2px;
    background: linear-gradient(#f6f6f6, #dcdcdc);
    line-height: 10px;
    text-align: center;
}

.btn.off {
    border-color: #c0c0c0;
    color: #a8a8a8;
}

.resize {
    width: 8px;
    height: 8px;
    margin: auto 0 0 auto;
}

.ring {
    position: absolute;
    left: 233px;
    top: 63px;
    width: 62px;
    height: 21px;
    box-sizing: border-box;
    border: 2px solid #e81c20;
    border-radius: 50%;
    transform: rotate(-1deg);
}

.ring-tree {
    position: absolute;
    left: 1px;
    top: 62px;
    width: 99px;
    height: 52px;
    box-sizing: border-box;
    border: 2px solid #e81c20;
    border-radius: 50%;
    transform: rotate(4deg);
}

.para {
    margin-left: 50px;
    font-family: "Liberation Serif", "Noto Sans CJK SC", serif;
    font-size: 20px;
    color: #111;
    white-space: nowrap;
}

.para p {
    margin: 0;
}

.ls-a {
    letter-spacing: 1.31px;
}

.ls-b {
    letter-spacing: 0.65px;
}

.ls-c {
    letter-spacing: 0.87px;
}

.ls-d {
    letter-spacing: 0.8px;
}

.nar {
    letter-spacing: -8.2px;
}

.first-para {
    margin-top: 9px;
    margin-bottom: 7px;
    line-height: 30.5px;
}

.heading {
    display: flex;
    height: 28px;
    margin: 11px 0 0 12px;
    font-family: "Liberation Serif", "Noto Sans CJK SC", serif;
    font-size: 23.5px;
    font-weight: 400;
    line-height: 28px;
    color: #111;
}

.heading span {
    width: 38px;
    flex: none;
}

.last-para {
    margin-top: -2px;
    line-height: 32.5px;
}
</style>
